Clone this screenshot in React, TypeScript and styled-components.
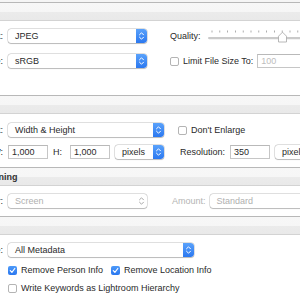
import styled, { createGlobalStyle } from 'styled-components';

const GlobalStyle = createGlobalStyle`
  html, body {
    margin: 0;
    padding: 0;
    background: #ffffff;
    overflow: hidden;
  }
  body {
    font-family: "Liberation Sans", Arial, sans-serif;
    font-size: 9px;
    color: #2a2a2a;
  }
`;

const Panel = styled.div`
  margin-left: -100px;
  width: 440px;
  display: flex;
  flex-direction: column;
`;

const TopStrip = styled.div`
  height: 2px;
  background: #f5f5f5;
`;

const Section = styled.section`
  border-top: 1px solid #b8b8b8;
  display: flex;
  flex-direction: column;
`;

const Header = styled.div`
  height: 18px;
  box-sizing: border-box;
  padding: 1px 0 0 36px;
  display: flex;
  align-items: center;
  background: linear-gradient(to bottom, #f7f7f7 0%, #f6f6f6 50%, #ebebeb 52%, #e9e9e9 100%);
  border-bottom: 1px solid #d3d3d3;
  font-weight: 700;
  color: #333333;
`;

const Content = styled.div<{ $top: number; $bottom: number; $gap: number }>`
  display: flex;
  flex-direction: column;
  padding: ${(p) => p.$top}px 0 ${(p) => p.$bottom}px 0;
  gap: ${(p) => p.$gap}px;
`;

const Row = styled.div<{ $h?: number }>`
  display: flex;
  align-items: center;
  height: ${(p) => p.$h ?? 14}px;
`;

const Label = styled.span`
  width: 103px;
  margin-right: 5px;
  text-align: right;
  white-space: nowrap;
  flex-shrink: 0;
`;

const Indent = styled.span`
  width: 108px;
  flex-shrink: 0;
`;

const Text = styled.span<{ $ml?: number; $mr?: number; $disabled?: boolean }>`
  margin-left: ${(p) => p.$ml ?? 0}px;
  margin-right: ${(p) => p.$mr ?? 0}px;
  white-space: nowrap;
  flex-shrink: 0;
  color: ${(p) => (p.$disabled ? '#b4b4b4' : '#2a2a2a')};
`;

const SelectBox = styled.div<{ $w: number; $ml?: number; $disabled?: boolean }>`
  width: ${(p) => p.$w}px;
  margin-left: ${(p) => p.$ml ?? 0}px;
  height: 14px;
  flex-shrink: 0;
  box-sizing: border-box;
  display: flex;
  align-items: center;
  justify-content: space-between;
  padding-left: 7px;
  background: #ffffff;
  border-radius: 3px;
  box-shadow: 0 0 0 0.5px rgba(0, 0, 0, 0.22), 0 0.5px 1px rgba(0, 0, 0, 0.18);
  color: ${(p) => (p.$disabled ? '#b0b0b0' : '#2a2a2a')};
  white-space: nowrap;
  overflow: hidden;
`;

const Stepper = styled.span<{ $disabled?: boolean }>`
  width: 11px;
  height: 14px;
  flex-shrink: 0;
  display: flex;
  align-items: center;
  justify-content: center;
  border-radius: 0 3px 3px 0;
  background: ${(p) =>
    p.$disabled ? 'transparent' : 'linear-gradient(to bottom, #5aa2fb 0%, #2b78f0 100%)'};
`;

const Field = styled.div<{ $w: number; $ml?: number; $disabled?: boolean }>`
  width: ${(p) => p.$w}px;
  margin-left: ${(p) => p.$ml ?? 0}px;
  height: 14px;
  flex-shrink: 0;
  box-sizing: border-box;
  padding-left: 3px;
  display: flex;
  align-items: center;
  background: #ffffff;
  border: 1px solid #c6c6c6;
  border-top-color: #b9b9b9;
  color: ${(p) => (p.$disabled ? '#bdbdbd' : '#2a2a2a')};
  white-space: nowrap;
`;

const Box = styled.span<{ $checked?: boolean; $ml?: number }>`
  width: 9px;
  height: 9px;
  margin-left: ${(p) => p.$ml ?? 0}px;
  margin-right: 4px;
  flex-shrink: 0;
  box-sizing: border-box;
  border-radius: 2px;
  display: flex;
  align-items: center;
  justify-content: center;
  background: ${(p) => (p.$checked ? 'linear-gradient(to bottom, #4d9af9, #2a77ef)' : '#ffffff')};
  border: ${(p) => (p.$checked ? 'none' : '1px solid #b4b4b4')};
`;

const SliderWrap = styled.div`
  margin-left: 7px;
  width: 100px;
  height: 14px;
  flex-shrink: 0;
`;

const Chevrons = ({ disabled }: { disabled?: boolean }) => (
  <svg width="7" height="10" viewBox="0 0 7 10">
    <path
      d="M1.5 3.8 L3.5 1.8 L5.5 3.8 M1.5 6.2 L3.5 8.2 L5.5 6.2"
      fill="none"
      stroke={disabled ? '#a8a8a8' : '#ffffff'}
      strokeWidth="1"
      strokeLinecap="round"
      strokeLinejoin="round"
    />
  </svg>
);

const Select = ({
  value,
  w,
  ml,
  disabled,
}: {
  value: string;
  w: number;
  ml?: number;
  disabled?: boolean;
}) => (
  <SelectBox $w={w} $ml={ml} $disabled={disabled}>
    <span>{value}</span>
    <Stepper $disabled={disabled}>
      <Chevrons disabled={disabled} />
    </Stepper>
  </SelectBox>
);

const Check = ({ checked, label, ml }: { checked?: boolean; label: string; ml?: number }) => (
  <>
    <Box $checked={checked} $ml={ml}>
      {checked && (
        <svg width="7" height="7" viewBox="0 0 7 7">
          <path
            d="M1.3 3.7 L2.9 5.3 L5.8 1.5"
            fill="none"
            stroke="#ffffff"
            strokeWidth="1.2"
            strokeLinecap="round"
            strokeLinejoin="round"
          />
        </svg>
      )}
    </Box>
    <Text>{label}</Text>
  </>
);

const QualitySlider = () => (
  <SliderWrap>
    <svg width="100" height="14" viewBox="0 0 100 14">
      {Array.from({ length: 12 }).map((_, i) => (
        <rect key={i} x={3.6 + i * 7.8} y="1.5" width="0.8" height="2" fill="#9a9a9a" />
      ))}
      <rect x="0" y="8" width="100" height="2.2" rx="1.1" fill="#cacaca" />
      <path
        d="M70.5 13 L70.5 7.2 L74.5 3.2 L78.5 7.2 L78.5 13 Z"
        fill="#ffffff"
        stroke="#a6a6a6"
        strokeWidth="0.8"
        strokeLinejoin="round"
      />
    </svg>
  </SliderWrap>
);

export default function App() {
  return (
    <>
      <GlobalStyle />
      <Panel>
        <TopStrip />

        <Section>
          <Header>File Settings</Header>
          <Content $top={8} $bottom={27} $gap={11}>
            <Row>
              <Label>Image Format:</Label>
              <Select value="JPEG" w={139} />
              <Text $ml={23}>Quality:</Text>
              <QualitySlider />
            </Row>
            <Row>
              <Label>Color Space:</Label>
              <Select value="sRGB" w={139} />
              <Check label="Limit File Size To:" ml={23} />
              <Field $w={50} $ml={4} $disabled>
                100
              </Field>
            </Row>
          </Content>
        </Section>

        <Section>
          <Header>Image Sizing</Header>
          <Content $top={9} $bottom={8} $gap={8}>
            <Row>
              <Label>Resize to Fit:</Label>
              <Select value="Width &amp; Height" w={156} />
              <Check label="Don't Enlarge" ml={14} />
            </Row>
            <Row>
              <Label>W:</Label>
              <Field $w={40}>1,000</Field>
              <Text $ml={5}>H:</Text>
              <Field $w={40} $ml={8}>
                1,000
              </Field>
              <Select value="pixels" w={49} ml={5} />
              <Text $ml={16}>Resolution:</Text>
              <Field $w={40} $ml={5}>
                350
              </Field>
              <Select value="pixels per inch" w={80} ml={5} />
            </Row>
          </Content>
        </Section>

        <Section>
          <Header>Output Sharpening</Header>
          <Content $top={8} $bottom={8} $gap={0}>
            <Row>
              <Label>Sharpen For:</Label>
              <Select value="Screen" w={139} disabled />
              <Text $ml={25} $disabled>
                Amount:
              </Text>
              <Select value="Standard" w={110} ml={4} disabled />
            </Row>
          </Content>
        </Section>

        <Section>
          <Header>Metadata</Header>
          <Content $top={8} $bottom={0} $gap={8}>
            <Row>
              <Label>Include:</Label>
              <Select value="All Metadata" w={186} />
            </Row>
            <Row $h={10}>
              <Indent />
              <Check checked label="Remove Person Info" />
              <Check checked label="Remove Location Info" ml={8} />
            </Row>
            <Row $h={10}>
              <Indent />
              <Check label="Write Keywords as Lightroom Hierarchy" />
            </Row>
          </Content>
        </Section>
      </Panel>
    </>
  );
}
